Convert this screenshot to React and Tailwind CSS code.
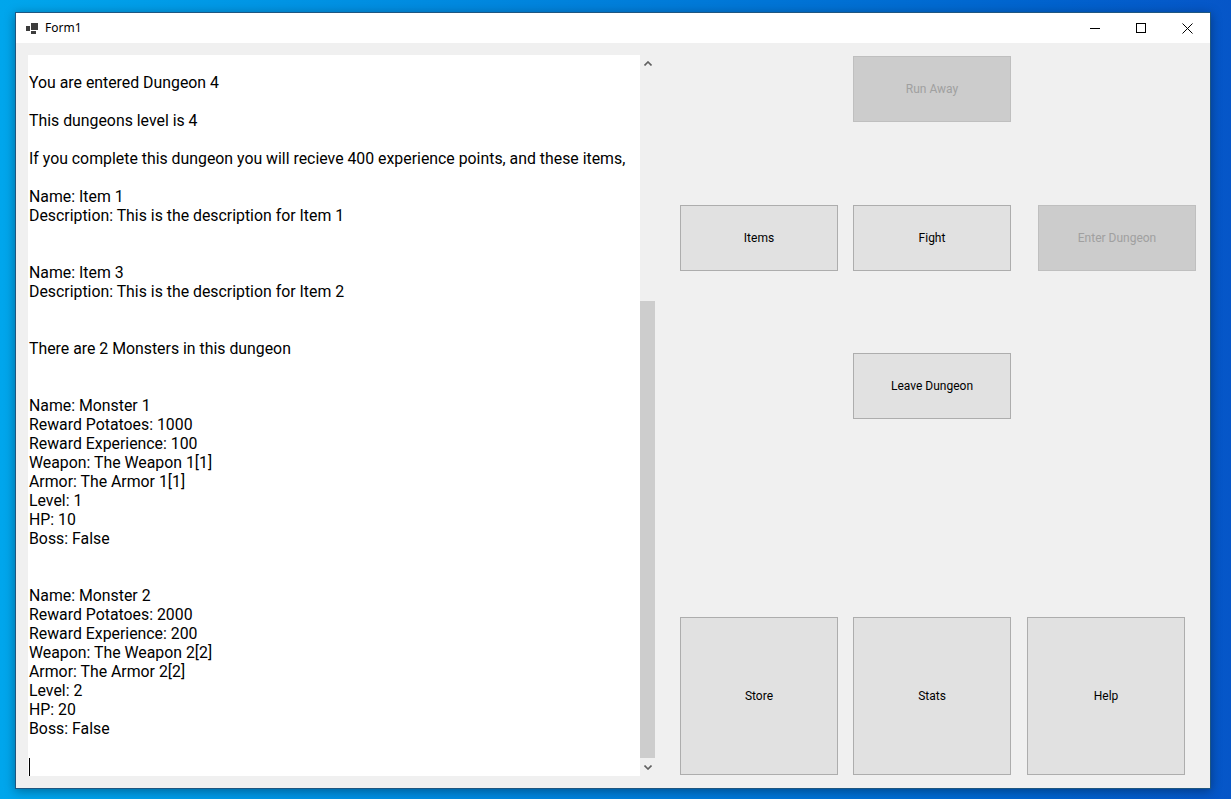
import React from "react";

const lines = [
  "You are entered Dungeon 4",
  "",
  "This dungeons level is 4",
  "",
  "If you complete this dungeon you will recieve 400 experience points, and these items,",
  "",
  "Name: Item 1",
  "Description: This is the description for Item 1",
  "",
  "",
  "Name: Item 3",
  "Description: This is the description for Item 2",
  "",
  "",
  "There are 2 Monsters in this dungeon",
  "",
  "",
  "Name: Monster 1",
  "Reward Potatoes: 1000",
  "Reward Experience: 100",
  "Weapon: The Weapon 1[1]",
  "Armor: The Armor 1[1]",
  "Level: 1",
  "HP: 10",
  "Boss: False",
  "",
  "",
  "Name: Monster 2",
  "Reward Potatoes: 2000",
  "Reward Experience: 200",
  "Weapon: The Weapon 2[2]",
  "Armor: The Armor 2[2]",
  "Level: 2",
  "HP: 20",
  "Boss: False",
  "",
];

const FormButton = ({ text, disabled, size = "wide", className = "" }) => {
  const dims = size === "square" ? "w-[158px] h-[158px]" : "w-[158px] h-[66px]";
  const look = disabled
    ? "bg-[#cccccc] border-[#bfbfbf] text-[#a0a0a0]"
    : "bg-[#e1e1e1] border-[#adadad] text-black";
  return (
    <div
      className={`${dims} ${look} ${className} shrink-0 border flex items-center justify-center text-[12px] font-['Roboto',sans-serif]`}
    >
      {text}
    </div>
  );
};

const FormIcon = () => (
  <svg width="12" height="11" viewBox="0 0 12 11" className="shrink-0">
    <rect x="5" y="0" width="7" height="7" fill="#3c3c3c" />
    <rect x="0" y="3" width="4" height="5" fill="#3c3c3c" />
    <rect x="5" y="8" width="5" height="3" fill="#3c3c3c" />
  </svg>
);

const TitleBar = () => (
  <div className="h-[30px] bg-white flex items-center shrink-0">
    <div className="pl-[10px] flex items-center">
      <FormIcon />
      <span className="ml-[7px] text-[12px] text-black font-['Noto_Sans',sans-serif]">Form1</span>
    </div>
    <div className="ml-auto flex h-full">
      <div className="w-[46px] h-full flex items-center justify-center">
        <div className="w-[10px] h-px bg-black" />
      </div>
      <div className="w-[46px] h-full flex items-center justify-center">
        <div className="w-[10px] h-[10px] border border-black" />
      </div>
      <div className="w-[46px] h-full flex items-center justify-center">
        <svg width="11" height="11" viewBox="0 0 11 11">
          <path d="M0.5 0.5 L10.5 10.5 M10.5 0.5 L0.5 10.5" stroke="#000" strokeWidth="1" />
        </svg>
      </div>
    </div>
  </div>
);

const Chevron = ({ down }) => (
  <svg width="8" height="5" viewBox="0 0 8 5">
    <path
      d={down ? "M0.5 0.5 L4 4 L7.5 0.5" : "M0.5 4.5 L4 1 L7.5 4.5"}
      fill="none"
      stroke="#606060"
      strokeWidth="1.6"
    />
  </svg>
);

const OutputBox = () => (
  <div className="flex w-[629px] h-[721px] shrink-0">
    <div className="w-[612px] h-full bg-white overflow-hidden pt-[18px] pl-[1px] text-[15.85px] leading-[19px] text-black font-['Roboto',sans-serif]">
      {lines.map((line, i) =>
        line ? (
          <div key={i} className="whitespace-pre">
            {line}
          </div>
        ) : (
          <div key={i} className="h-[19px]" />
        )
      )}
      <div className="h-[19px] flex items-center">
        <div className="w-px h-[18px] bg-black" />
      </div>
    </div>
    <div className="w-[17px] h-full flex flex-col">
      <div className="w-[15px] h-[17px] flex items-center justify-center">
        <Chevron />
      </div>
      <div className="flex-1 flex flex-col justify-end">
        <div className="w-[15px] h-[457px] mb-px bg-[#cdcdcd]" />
      </div>
      <div className="w-[15px] h-[17px] flex items-center justify-center">
        <Chevron down />
      </div>
    </div>
  </div>
);

const App = () => {
  return (
    <div className="w-[1231px] h-[799px] overflow-hidden bg-linear-to-r from-[#00a6ec] to-[#0656c8] pl-[15px] pt-[12px]">
      <div className="w-[1196px] h-[777px] border border-[#1f5680] bg-[#f0f0f0] flex flex-col shadow-[0_2px_10px_rgba(0,0,0,0.35)]">
        <TitleBar />
        <div className="flex-1 flex pl-[12px] pt-[12px]">
          <OutputBox />
          <div className="flex flex-col pt-px">
            <div className="flex">
              <FormButton text="Run Away" disabled className="ml-[196px]" />
            </div>
            <div className="flex mt-[83px]">
              <FormButton text="Items" className="ml-[23px]" />
              <FormButton text="Fight" className="ml-[15px]" />
              <FormButton text="Enter Dungeon" disabled className="ml-[27px]" />
            </div>
            <div className="flex mt-[82px]">
              <FormButton text="Leave Dungeon" className="ml-[196px]" />
            </div>
            <div className="flex mt-[198px]">
              <FormButton text="Store" size="square" className="ml-[23px]" />
              <FormButton text="Stats" size="square" className="ml-[15px]" />
              <FormButton text="Help" size="square" className="ml-[16px]" />
            </div>
          </div>
        </div>
      </div>
    </div>
  );
};

export default App;
